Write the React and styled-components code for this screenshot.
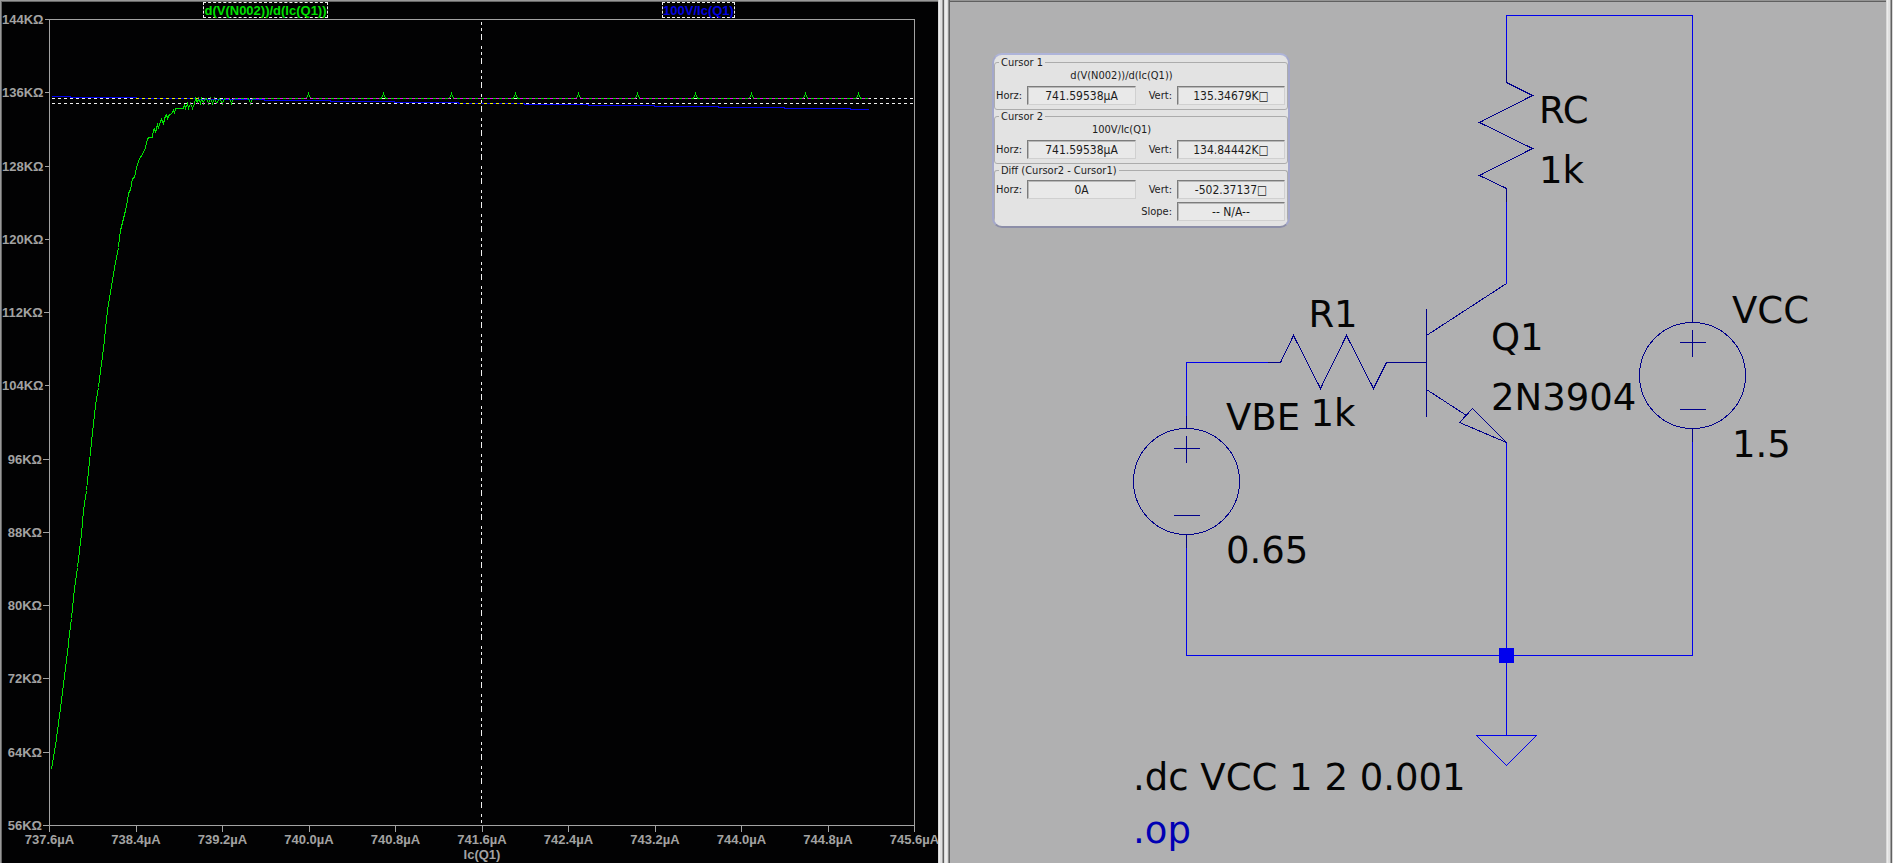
import React from "react";
import styled, { createGlobalStyle } from "styled-components";

const GlobalStyle = createGlobalStyle`
  *, *::before, *::after { box-sizing: border-box; }
  html, body { margin: 0; padding: 0; background: #b0b0b1; }
`;

const Workspace = styled.main`
  display: grid;
  grid-template-columns: minmax(0, 938fr) 12px minmax(0, 936fr) 7px;
  height: 100vh;
  overflow: hidden;
`;

const Splitter = styled.div`
  background: linear-gradient(
    to right,
    #d8d8d8 0 1px, #ececec 1px 2px, #e0e0e0 2px 4px, #a0a0a0 4px 5px, #606060 5px 6px,
    #d8d8d8 6px 7px, #ececec 7px 9px, #dcdcdc 9px 10px, #909090 10px 11px, #606060 11px 12px
  );
`;

const EdgeFrame = styled.div`
  background: linear-gradient(
    to right,
    #d8d8d8 0 1px, #ececec 1px 2px, #e0e0e0 2px 4px, #a0a0a0 4px 5px, #606060 5px 6px, #d8d8d8 6px 7px
  );
`;

const PlotPane = styled.section`
  display: grid;
  grid-template-columns: 47px minmax(0, 1fr) 23px;
  grid-template-rows: 17px minmax(0, 1fr) 37px;
  overflow: hidden;
  background: #020203;
  border-top: 1px solid #999;
  border-left: 1px solid #999;
  box-shadow: inset 1px 1px 0 #666;
  padding: 1px 0 0 1px;
  color: #a2a2a2;
  font: bold 13px/15px "Liberation Sans", Arial, sans-serif;
`;

const TraceBar = styled.header`
  grid-column: 2;
  display: grid;
  grid-template-columns: 1fr 1fr;
  justify-items: center;
  align-items: start;
`;

const TraceName = styled.button`
  height: 16px;
  padding: 0;
  border: 1px dashed #f0f0f0;
  background: #000;
  color: ${(p) => p.$color};
  font: inherit;
  line-height: 13px;
  white-space: nowrap;
`;

const YAxis = styled.div`
  grid-column: 1;
  grid-row: 2;
  display: flex;
  flex-direction: column;
  justify-content: space-between;
  margin: -7px 0;
`;

const YLabel = styled.div`
  display: flex;
  align-items: center;
  justify-content: flex-end;
  gap: 1px;
  height: 15px;

  &::after {
    content: "";
    width: 6px;
    height: 1px;
    background: #a2a2a2;
  }
`;

const PlotFrame = styled.div`
  grid-column: 2;
  grid-row: 2;
  border: 1px solid #a2a2a2;
`;

const PlotDrawing = styled.svg`
  display: block;
  width: 100%;
  height: 100%;
  shape-rendering: crispEdges;
  isolation: isolate;

  path {
    fill: none;
    stroke-width: 1;
    vector-effect: non-scaling-stroke;
  }
`;

const CursorLine = styled.path`
  stroke: #f0f0f0;
  mix-blend-mode: difference;
`;

const XAxis = styled.div`
  grid-column: 2;
  grid-row: 3;
`;

const XLabels = styled.div`
  display: flex;
  justify-content: space-between;
  margin: 0 -30px;
`;

const XLabel = styled.div`
  display: flex;
  flex-direction: column;
  align-items: center;
  width: 61px;

  &::before {
    content: "";
    width: 1px;
    height: 6px;
    background: #a2a2a2;
  }
`;

const AxisTitle = styled.div`
  text-align: center;
`;

const SchematicPane = styled.section`
  position: relative;
  min-height: 0;
  background: #b0b0b1;
  border-top: 1px solid #949494;
  box-shadow: inset 0 1px 0 #606060;
  padding-top: 1px;
`;

const SchematicDrawing = styled.svg`
  display: block;
  width: 100%;
  height: 100%;

  path, circle {
    fill: none;
    stroke-width: 1;
    shape-rendering: crispEdges;
  }
`;

const Wire = styled.path`
  stroke: #0000ee;
`;

const Part = styled.g`
  stroke: #00008b;
`;

const Label = styled.text`
  font-family: "DejaVu Sans", sans-serif;
  font-size: 37px;
  fill: ${(p) => (p.$directive ? "#0000b4" : "#050505")};
`;

const CursorWindow = styled.form`
  position: absolute;
  top: 52px;
  left: 42px;
  width: 298px;
  height: 175px;
  overflow: hidden;
  padding-top: 1px;
  border: 2px solid;
  border-color: #aeb4da #a4a8cc #8c8ea8 #a4a8cc;
  border-radius: 10px;
  background: #e3e3e3;
  color: #1c1c1c;
  font: 11px/13px "DejaVu Sans Condensed", "DejaVu Sans", sans-serif;
`;

const Group = styled.fieldset`
  min-width: 0;
  margin: 0;
  padding: 0 2px 4px 1px;
  border: 1px solid #acacac;
  border-radius: 3px;
  border-bottom-width: ${(p) => (p.$open ? "0" : "1px")};

  legend {
    margin-left: 3px;
    padding: 0 2px;
  }
`;

const Expression = styled.div`
  margin-bottom: 4px;
  padding-right: 38px;
  text-align: center;
`;

const Fields = styled.div`
  display: grid;
  grid-template-columns: 31px 109px 41px minmax(0, 1fr);
  row-gap: 3px;
  align-items: center;
  padding-top: ${(p) => (p.$spaced ? "3px" : "0")};
`;

const FieldName = styled.label`
  grid-column: ${(p) => p.$column};
  padding-right: 5px;
  justify-self: ${(p) => (p.$column === 1 ? "start" : "end")};
  white-space: nowrap;
`;

const Readout = styled.input`
  width: 100%;
  height: 19px;
  padding: 0;
  border: 1px solid;
  border-color: #7c7c7c #d0d0d0 #d0d0d0 #7c7c7c;
  box-shadow: inset 1px 1px 0 #b8b8b8;
  background: #e9e9e9;
  color: inherit;
  font: 12px/15px "DejaVu Sans Condensed", "DejaVu Sans", sans-serif;
  text-align: center;
`;

const yTicks = [144, 136, 128, 120, 112, 104, 96, 88, 80, 72, 64, 56];
const xTicks = ["737.6", "738.4", "739.2", "740.0", "740.8", "741.6", "742.4", "743.2", "744.0", "744.8", "745.6"];

const rise = [
  [51, 769], [53, 757], [55, 745], [57, 730], [59, 715], [61, 700], [63, 683], [65, 668], [67, 652],
  [69, 633], [71, 618], [74, 588], [77, 567], [81, 533], [83, 510], [86, 490], [89, 461], [92, 432],
  [95, 405], [98, 387], [101, 363], [104, 340], [105, 328], [107, 310], [110, 292], [112, 280],
  [114, 267], [116, 257], [118, 247], [119, 237], [120, 230],
  [122, 222], [125, 210], [127, 200], [128, 193], [130, 189], [132, 178], [134, 177], [136, 167],
  [138, 161], [140, 156], [142, 155], [143, 151], [144, 150], [147, 139], [148, 137], [152, 137],
  [153, 129], [154, 128], [155, 132], [157, 124], [158, 127], [160, 121], [161, 119], [163, 123],
  [165, 115], [166, 114], [167, 118], [169, 114], [172, 113], [173, 109], [174, 113], [175, 108],
  [183, 108], [184, 104], [185, 108], [187, 103], [188, 108], [190, 103], [192, 108], [194, 103],
  [195, 98], [197, 102], [198, 98], [200, 103], [201, 98], [203, 103], [204, 98], [206, 98],
  [208, 103], [210, 98], [212, 103], [214, 98], [216, 103], [219, 98], [222, 103], [224, 98],
  [229, 98], [231, 103], [233, 98], [248, 98], [250, 103], [252, 98],
];
const peaks = [308, 383, 451, 515, 578, 637, 695, 751, 805, 858];
const derivativePath =
  "M" + rise.map((p) => p.join(" ")).join("L") +
  peaks.map((x) => `H${x - 2}L${x} 93L${x + 2} 98`).join("") + "H868";

const slopeSteps = [70, 136, 198, 264, 330, 394, 458, 524, 588, 654, 718, 784, 850, 868];
const earlyPath = "M51 96" + slopeSteps.map((x, i) => `V${96 + i}H${x}`).join("");

function Plot() {
  return (
    <PlotPane aria-label="Waveform">
      <TraceBar>
        <TraceName type="button" $color="#00e000">d(V(N002))/d(Ic(Q1))</TraceName>
        <TraceName type="button" $color="#0000e0">100V/Ic(Q1)</TraceName>
      </TraceBar>
      <YAxis>
        {yTicks.map((v) => <YLabel key={v}>{v}KΩ</YLabel>)}
      </YAxis>
      <PlotFrame>
        <PlotDrawing viewBox="50 20 864 805" preserveAspectRatio="none" aria-hidden="true">
          <g transform="translate(.5 .5)">
            <path d={earlyPath} stroke="#0000ee" />
            <path d={derivativePath} stroke="#00e600" />
            <CursorLine d="M51.5 98H913" strokeDasharray="3 3" />
            <CursorLine d="M51.5 103H913" strokeDasharray="3 3" />
            <CursorLine d="M481 21.5V824" strokeDasharray="3 3 3 3 6 6" />
          </g>
        </PlotDrawing>
      </PlotFrame>
      <XAxis>
        <XLabels>
          {xTicks.map((v) => <XLabel key={v}>{v}µA</XLabel>)}
        </XLabels>
        <AxisTitle>Ic(Q1)</AxisTitle>
      </XAxis>
    </PlotPane>
  );
}

function VoltageSource({ x, y }) {
  return (
    <Part transform={`translate(${x} ${y})`}>
      <circle r="53" />
      <path d="M0 -66V-53M0 53V66M-13 -33H13M0 -46V-19M-13 34H13" />
    </Part>
  );
}

function Schematic() {
  return (
    <SchematicDrawing viewBox="950 2 936 861" role="img" aria-label="Circuit schematic">
      <g transform="translate(.5 .5)">
        <Wire d="M1506 69V15H1692V309M1692 441V655H1186V547M1186 416V362H1267M1506 201V283M1506 442V735" />
        <Wire d="M1476 735H1536L1506 765Z" />
        <rect x="1499" y="648" width="15" height="15" fill="#0000ee" transform="translate(-.5 -.5)" />
        <Part>
          <path d="M1506 69V82L1532 95L1479 122L1532 148L1479 175L1506 188V201" />
          <path d="M1267 362H1280L1293 335L1320 388L1346 335L1373 388L1386 362H1426" />
          <path d="M1426 308V416M1506 283L1426 335M1426 389L1466 415M1459 422L1472 408L1506 442Z" />
        </Part>
        <VoltageSource x={1186} y={481} />
        <VoltageSource x={1692} y={375} />
      </g>
      <Label x="1539" y="123">RC</Label>
      <Label x="1539" y="183">1k</Label>
      <Label x="1333" y="327" textAnchor="middle">R1</Label>
      <Label x="1333" y="426" textAnchor="middle">1k</Label>
      <Label x="1226" y="430">VBE</Label>
      <Label x="1226" y="563">0.65</Label>
      <Label x="1491" y="350">Q1</Label>
      <Label x="1491" y="410">2N3904</Label>
      <Label x="1732" y="323">VCC</Label>
      <Label x="1732" y="457">1.5</Label>
      <Label x="1133" y="790">.dc VCC 1 2 0.001</Label>
      <Label x="1133" y="843" $directive>.op</Label>
    </SchematicDrawing>
  );
}

function Field({ id, name, value, column }) {
  return (
    <>
      <FieldName htmlFor={id} $column={column}>{name}</FieldName>
      <Readout id={id} type="text" readOnly value={value} />
    </>
  );
}

function CursorReadout() {
  return (
    <CursorWindow aria-label="Cursor readout">
      <Group>
        <legend>Cursor 1</legend>
        <Expression>d(V(N002))/d(Ic(Q1))</Expression>
        <Fields>
          <Field id="c1-horz" name="Horz:" value="741.59538µA" column={1} />
          <Field id="c1-vert" name="Vert:" value="135.34679K□" column={3} />
        </Fields>
      </Group>
      <Group>
        <legend>Cursor 2</legend>
        <Expression>100V/Ic(Q1)</Expression>
        <Fields>
          <Field id="c2-horz" name="Horz:" value="741.59538µA" column={1} />
          <Field id="c2-vert" name="Vert:" value="134.84442K□" column={3} />
        </Fields>
      </Group>
      <Group $open>
        <legend>Diff (Cursor2 - Cursor1)</legend>
        <Fields $spaced>
          <Field id="diff-horz" name="Horz:" value="0A" column={1} />
          <Field id="diff-vert" name="Vert:" value="-502.37137□" column={3} />
          <Field id="diff-slope" name="Slope:" value="-- N/A--" column={3} />
        </Fields>
      </Group>
    </CursorWindow>
  );
}

export default function App() {
  return (
    <>
      <GlobalStyle />
      <Workspace>
        <Plot />
        <Splitter />
        <SchematicPane aria-label="Schematic">
          <Schematic />
          <CursorReadout />
        </SchematicPane>
        <EdgeFrame />
      </Workspace>
    </>
  );
}
